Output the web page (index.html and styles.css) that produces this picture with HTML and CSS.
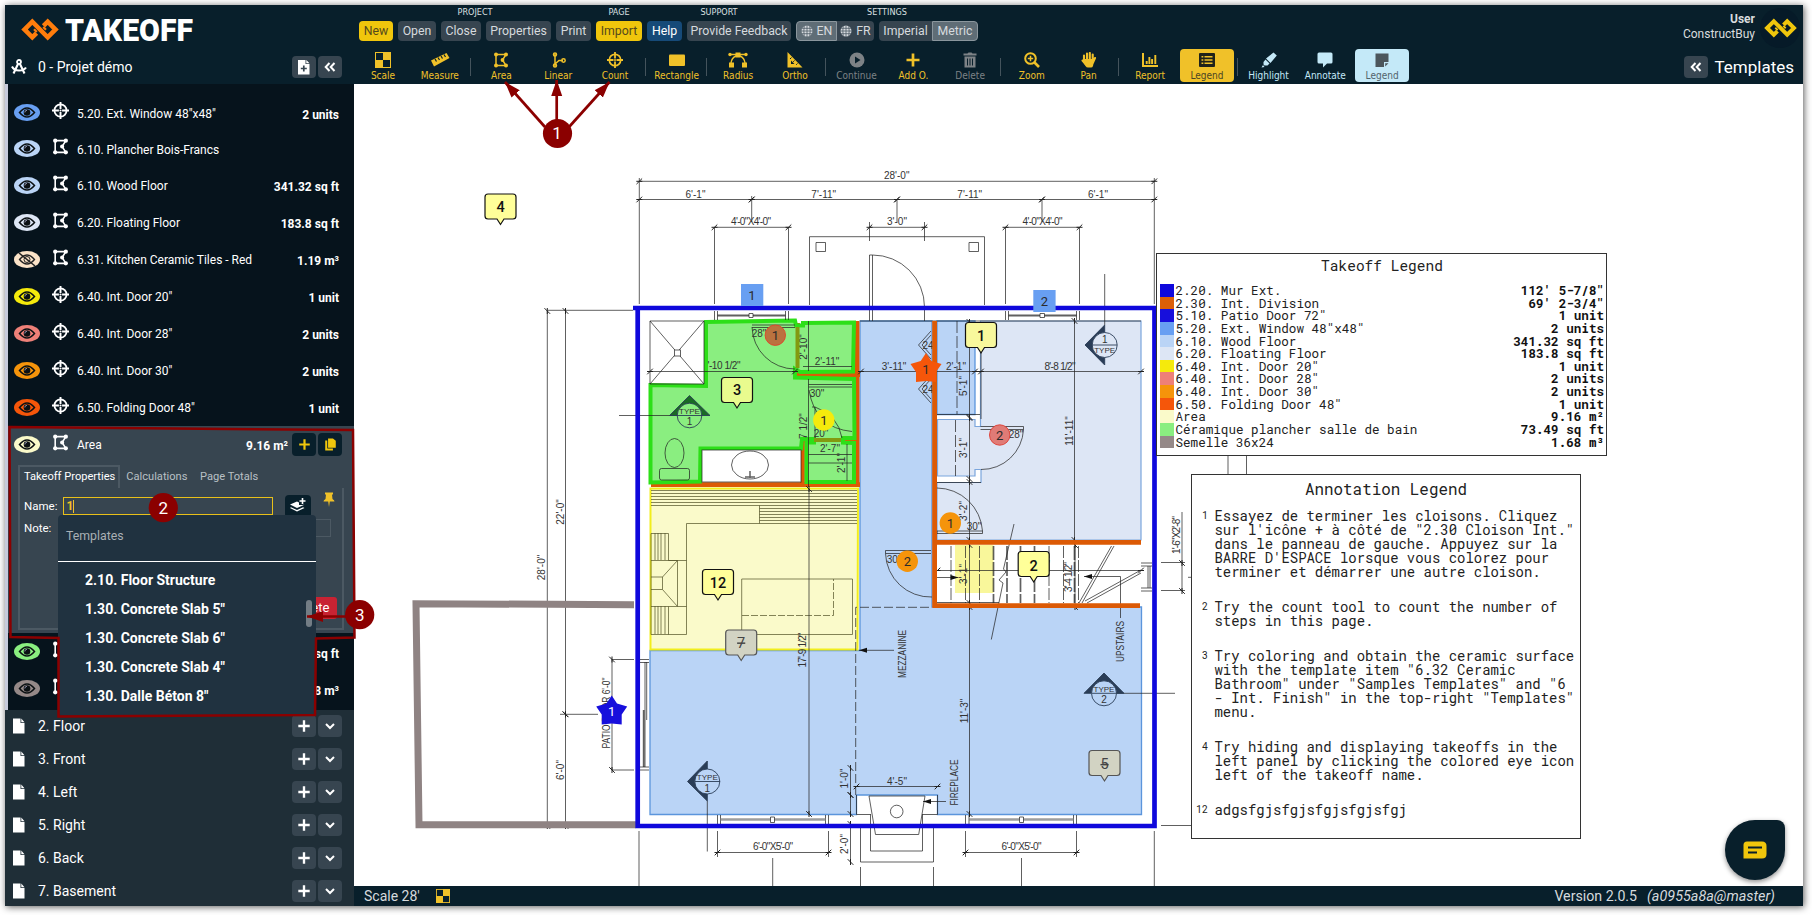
FILE: index.html
```html
<!DOCTYPE html>
<html lang="en">
<head>
<meta charset="utf-8">
<title>Takeoff</title>
<link rel="stylesheet" href="styles.css">
</head>
<body>
<svg class="sprite" width="0" height="0" aria-hidden="true">
  <symbol id="logo" viewBox="0 0 38 23"><path d="M15.500 15.100 11.300 19.300 3.500 11.500 11.300 3.700 26.700 19.300 34.500 11.500 26.700 3.700 22.500 7.900" fill="none" stroke="currentColor" stroke-width="4.600"/><path d="M13 11.200 15.800 14M25 11.800 22.200 9" stroke="currentColor" stroke-width="2.200"/></symbol>
  <symbol id="eye" viewBox="0 0 26 17"><path d="M5.500 8.500Q13-.5 20.500 8.500 13 17.500 5.500 8.500Z" fill="none" stroke="#0b1013" stroke-width="1.500"/><circle cx="13" cy="8.500" r="3.300" fill="#0b1013"/><path d="M13 6.300A2.200 2.200 0 0 0 10.800 8.500" stroke="#aac" stroke-width=".8" fill="none"/></symbol>
  <symbol id="eye-off" viewBox="0 0 26 17"><path d="M5.500 8.500Q13-.5 20.500 8.500 13 17.500 5.500 8.500Z" fill="none" stroke="#222" stroke-width="1.300"/><circle cx="13" cy="8.500" r="3" fill="none" stroke="#222"/><path d="M5 2 21 15" stroke="#222" stroke-width="1.500"/></symbol>
  <symbol id="target" viewBox="0 0 16 16"><circle cx="8" cy="8" r="5.700" fill="none" stroke="currentColor" stroke-width="1.700"/><path d="M8 0V6.500M8 9.500V16M0 8H6.500M9.500 8H16" stroke="currentColor" stroke-width="1.800"/><circle cx="8" cy="8" r="1" fill="currentColor"/></symbol>
  <symbol id="area" viewBox="0 0 16 16"><path d="M3 2.500H13L9.500 8 13 13.500H3Z" fill="none" stroke="currentColor" stroke-width="1.500"/><g fill="currentColor"><circle cx="3" cy="2.500" r="2"/><circle cx="13" cy="2.500" r="2"/><circle cx="9.500" cy="8" r="1.900"/><circle cx="13" cy="13.500" r="2"/><circle cx="3" cy="13.500" r="2"/></g></symbol>
  <symbol id="linear" viewBox="0 0 16 16"><path d="M5 2V14M5 12 9 8.500H13" fill="none" stroke="currentColor" stroke-width="1.500"/><g fill="none" stroke="currentColor" stroke-width="1.500"><circle cx="5" cy="2.500" r="1.500"/><circle cx="5" cy="13.500" r="1.500"/><circle cx="13.500" cy="8.500" r="1.700"/></g></symbol>
  <symbol id="scale" viewBox="0 0 16 16"><rect x=".5" y=".5" width="15" height="15" fill="none" stroke="currentColor"/><path d="M8 0H16V8H0V16H8Z" fill="currentColor"/></symbol>
  <symbol id="scale-alt" viewBox="0 0 16 16"><rect x=".5" y=".5" width="15" height="15" fill="none" stroke="currentColor"/><path d="M8 0H16V8H0V16H8Z" fill="currentColor"/></symbol>
  <symbol id="measure" viewBox="0 0 20 16"><path d="M1 8.500 16.500 1 19.500 6 4 14.500Z" fill="currentColor"/><path d="M5 7 6.500 9.500M8 5.500 9.500 8M11 4 12.500 6.500M14 2.500 15.500 5" stroke="#081f2b" stroke-width="1.200"/></symbol>
  <symbol id="rect" viewBox="0 0 16 16"><rect y="2.500" width="16" height="11.500" rx="1" fill="currentColor"/></symbol>
  <symbol id="radius" viewBox="0 0 20 16"><path d="M2 2.500H18M8 4Q3.500 6 3 11M12 4Q16.500 6 17 11" fill="none" stroke="currentColor" stroke-width="1.400"/><g fill="currentColor"><rect x="7.500" y=".5" width="5" height="5"/><rect x="1" y="10.500" width="5" height="5"/><rect x="14" y="10.500" width="5" height="5"/><circle cx="2" cy="2.500" r="1.700"/><circle cx="18" cy="2.500" r="1.700"/></g></symbol>
  <symbol id="ortho" viewBox="0 0 16 16"><path fill-rule="evenodd" d="M.5 0 15.500 15.500H.5ZM4 8.500V12H7.500Z" fill="currentColor"/><path d="M4.500 5.500 3 7M7.500 8.500 6.200 9.800M10.500 11.500 9.200 12.800" stroke="#081f2b"/></symbol>
  <symbol id="play" viewBox="0 0 16 16"><circle cx="8" cy="8" r="7.500" fill="currentColor"/><path d="M6 4.500 11.500 8 6 11.500Z" fill="#081f2b"/></symbol>
  <symbol id="plus" viewBox="0 0 16 16"><path d="M8 1.500V14.500M1.500 8H14.500" stroke="currentColor" stroke-width="2.700"/></symbol>
  <symbol id="trash" viewBox="0 0 16 16"><path d="M1.500 1.500H5.500L6.500 .5H9.500L10.500 1.500H14.500V3.500H1.500ZM2.500 4.500H13.500V15.500H2.500Z" fill="currentColor"/><path d="M5.500 6.500V13.500M8 6.500V13.500M10.500 6.500V13.500" stroke="#081f2b"/></symbol>
  <symbol id="zoom" viewBox="0 0 16 16"><circle cx="6.500" cy="6.500" r="5.300" fill="none" stroke="currentColor" stroke-width="2"/><path d="M6.500 3.800V9.200M3.800 6.500H9.200" stroke="currentColor" stroke-width="1.500"/><path d="M10.500 10.500 15 15" stroke="currentColor" stroke-width="2.700"/></symbol>
  <symbol id="hand" viewBox="0 0 16 16"><path d="M3 3.500V9M6 1.500V8M8.800 1V8M11.700 2.500V9M1.500 8.500 5 12.500M14 6 12 10.500" stroke="currentColor" stroke-width="2.100" stroke-linecap="round"/><path d="M2.500 7H13.500L12 14Q11.500 15.500 10 15.500H7Q5.500 15.500 4.500 14L2 10Z" fill="currentColor"/></symbol>
  <symbol id="report" viewBox="0 0 16 16"><path d="M1 1V14H16" fill="none" stroke="currentColor" stroke-width="2"/><path d="M4.700 12V9M7.400 12V5M10.100 12V7M13.300 12V3" stroke="currentColor" stroke-width="1.900"/></symbol>
  <symbol id="list" viewBox="0 0 16 16"><rect y="1" width="16" height="14" rx="1" fill="#20231a"/><path d="M5.500 4.700H13.500M5.500 8H13.500M5.500 11.300H13.500" stroke="#f0c129" stroke-width="1.400"/><path d="M2.500 4.700H4.300M2.500 8H4.300M2.500 11.300H4.300" stroke="#f0c129" stroke-width="1.600"/></symbol>
  <symbol id="marker" viewBox="0 0 16 16"><path d="M12.500.5 15.800 3.500 9.500 11 5 6.500ZM4.500 7.500 8.500 11.500 6.500 13.500H3.500L2.500 12.500V10ZM.5 15.500 2 13 3.500 15Z" fill="currentColor"/></symbol>
  <symbol id="bubble" viewBox="0 0 16 16"><path d="M2 .5H14Q15.500.5 15.500 2V10Q15.500 11.500 14 11.500H10L6 15.500V11.500H2Q.5 11.500.5 10V2Q.5.5 2 .5Z" fill="currentColor"/></symbol>
  <symbol id="note" viewBox="0 0 16 16"><path d="M1.500 1.500H14.500V10H10V15H1.500ZM11.200 11.200H14.500L11.200 14.500Z" fill="#4c565c"/></symbol>
  <symbol id="globe" viewBox="0 0 12 12"><circle cx="6" cy="6" r="5.500" fill="currentColor"/><path d="M6 0V12M0 6H12M3.200 1Q2.500 6 3.200 11M8.800 1Q9.500 6 8.800 11M1 3.300H11M1 8.700H11" stroke="#4c5a64" stroke-width=".8" fill="none"/></symbol>
  <symbol id="chev2" viewBox="0 0 12 12"><path d="M5.500 2 1.700 6 5.500 10M10.500 2 6.700 6 10.500 10" fill="none" stroke="currentColor" stroke-width="2"/></symbol>
  <symbol id="down" viewBox="0 0 12 12"><path d="M2 4 6 8 10 4" fill="none" stroke="currentColor" stroke-width="2"/></symbol>
  <symbol id="file" viewBox="0 0 12 16"><path d="M0 .5H7.500V5H11.500V15.500H0ZM8.300.5 11.500 4.200H8.300Z" fill="currentColor"/></symbol>
  <symbol id="file-plus" viewBox="0 0 12 16"><path d="M0 1H7.500V5H11.500V15.500H0ZM8.300 1 11.500 4.200H8.300Z" fill="currentColor"/><path d="M5.800 6.500V12.500M2.800 9.500H8.800" stroke="#374550" stroke-width="1.700"/></symbol>
  <symbol id="copy" viewBox="0 0 14 16"><path d="M4 .5H10L13.500 3.500V12H4ZM.5 3H3V13H10V15.500H.5Z" fill="currentColor"/></symbol>
  <symbol id="compass" viewBox="0 0 16 16"><circle cx="8" cy="3" r="2" fill="none" stroke="currentColor" stroke-width="1.800"/><path d="M7 5 2.500 14.500M9 5 13.500 14.500M1 7.500Q3 11.500 8 11.500T15 8.500" fill="none" stroke="currentColor" stroke-width="2.100"/></symbol>
  <symbol id="layers" viewBox="0 0 16 16"><path d="M0 6.500 7 3.500 9 4.500V7H12L14.500 6.800 7 10ZM1 9.300 7 12 13 9.300 14.500 10 7 13.500 0 10Z" fill="currentColor"/><path d="M12.500 0V6M9.500 3H15.500" stroke="currentColor" stroke-width="1.600"/></symbol>
  <symbol id="pin" viewBox="0 0 12 16"><path d="M2 .5H10V2.500H9L9.500 7Q11.500 8 11.500 9.500H.5Q.5 8 2.500 7L3 2.500H2ZM5.200 9.500H6.800L6 15Z" fill="currentColor"/></symbol>
</svg>

<div class="app">
  <header class="header">
    <div class="brand">
      <div class="brand-logo">
        <svg class="brand-mark"><use href="#logo"/></svg>
        <svg class="brand-name" viewBox="0 0 150 44"><text x="0" y="33" textLength="128" lengthAdjust="spacingAndGlyphs">TAKEOFF</text></svg>
      </div>
      <div class="project">
        <svg class="project-icon"><use href="#compass"/></svg>
        <span class="project-name">0 - Projet démo</span>
        <button class="sq"><svg class="i-file"><use href="#file-plus"/></svg></button>
        <button class="sq"><svg class="i12"><use href="#chev2"/></svg></button>
      </div>
    </div>
    <div class="toolbar">
      <div class="menus">
        <div class="menu"><h6>PROJECT</h6><div class="btns"><button class="btn gold w34">New</button><button class="btn w38">Open</button><button class="btn w40">Close</button><button class="btn w65">Properties</button><button class="btn w35">Print</button></div></div>
        <div class="menu"><h6>PAGE</h6><div class="btns"><button class="btn gold w46">Import</button></div></div>
        <div class="menu"><h6>SUPPORT</h6><div class="btns"><button class="btn blue w35">Help</button><button class="btn w104">Provide Feedback</button></div></div>
        <div class="menu"><h6>SETTINGS</h6><div class="btns"><div class="pair"><button class="btn on w41"><svg class="i12"><use href="#globe"/></svg>EN</button><button class="btn w37"><svg class="i12"><use href="#globe"/></svg>FR</button></div><div class="pair"><button class="btn w53">Imperial</button><button class="btn on w46">Metric</button></div></div></div>
      </div>
      <div class="tools">
        <div class="tool"><svg><use href="#scale"/></svg>Scale</div>
        <div class="tool"><svg class="wide"><use href="#measure"/></svg>Measure</div>
        <i class="sep"></i>
        <div class="tool"><svg><use href="#area"/></svg>Area</div>
        <div class="tool"><svg><use href="#linear"/></svg>Linear</div>
        <div class="tool"><svg><use href="#target"/></svg>Count</div>
        <i class="sep"></i>
        <div class="tool"><svg><use href="#rect"/></svg>Rectangle</div>
        <i class="sep"></i>
        <div class="tool"><svg class="wide"><use href="#radius"/></svg>Radius</div>
        <div class="tool"><svg><use href="#ortho"/></svg>Ortho</div>
        <i class="sep"></i>
        <div class="tool off"><svg><use href="#play"/></svg>Continue</div>
        <div class="tool"><svg><use href="#plus"/></svg>Add O.</div>
        <div class="tool off"><svg><use href="#trash"/></svg>Delete</div>
        <i class="sep"></i>
        <div class="tool"><svg><use href="#zoom"/></svg>Zoom</div>
        <div class="tool"><svg><use href="#hand"/></svg>Pan</div>
        <i class="sep"></i>
        <div class="tool"><svg><use href="#report"/></svg>Report</div>
        <div class="tool active-gold"><svg><use href="#list"/></svg>Legend</div>
        <i class="sep"></i>
        <div class="tool ice"><svg><use href="#marker"/></svg>Highlight</div>
        <div class="tool ice"><svg><use href="#bubble"/></svg>Annotate</div>
        <div class="tool active-ice"><svg><use href="#note"/></svg>Legend</div>
      </div>
    </div>
    <div class="account">
      <div class="user"><div class="user-text"><b>User</b><span>ConstructBuy</span></div><div class="avatar"><svg><use href="#logo"/></svg></div></div>
      <div class="templates"><button class="sq"><svg class="i12"><use href="#chev2"/></svg></button><span>Templates</span></div>
    </div>
  </header>

  <div class="body">
    <aside class="sidebar">
      <div class="takeoffs">
        <div class="row short"><svg class="eye c-window"><use href="#eye"/></svg><svg class="kind"><use href="#target"/></svg><span>5.20. Ext. Window 48"x48"</span><b>2 units</b></div>
        <div class="row short"><svg class="eye c-wood"><use href="#eye"/></svg><svg class="kind"><use href="#area"/></svg><span>6.10. Plancher Bois-Francs</span></div>
        <div class="row"><svg class="eye c-wood"><use href="#eye"/></svg><svg class="kind"><use href="#area"/></svg><span>6.10. Wood Floor</span><b>341.32 sq ft</b></div>
        <div class="row"><svg class="eye c-float"><use href="#eye"/></svg><svg class="kind"><use href="#area"/></svg><span>6.20. Floating Floor</span><b>183.8 sq ft</b></div>
        <div class="row"><svg class="eye c-tile"><use href="#eye-off"/></svg><svg class="kind"><use href="#area"/></svg><span>6.31. Kitchen Ceramic Tiles - Red</span><b>1.19 m³</b></div>
        <div class="row"><svg class="eye c-d20"><use href="#eye"/></svg><svg class="kind"><use href="#target"/></svg><span>6.40. Int. Door 20"</span><b>1 unit</b></div>
        <div class="row"><svg class="eye c-d28"><use href="#eye"/></svg><svg class="kind"><use href="#target"/></svg><span>6.40. Int. Door 28"</span><b>2 units</b></div>
        <div class="row"><svg class="eye c-d30"><use href="#eye"/></svg><svg class="kind"><use href="#target"/></svg><span>6.40. Int. Door 30"</span><b>2 units</b></div>
        <div class="row"><svg class="eye c-fold"><use href="#eye"/></svg><svg class="kind"><use href="#target"/></svg><span>6.50. Folding Door 48"</span><b>1 unit</b></div>
        <section class="selected">
          <div class="row sel"><svg class="eye c-area"><use href="#eye"/></svg><svg class="kind"><use href="#area"/></svg><span>Area</span><b>9.16 m²</b><button class="dk"><svg class="i14"><use href="#plus"/></svg></button><button class="dk"><svg class="i14"><use href="#copy"/></svg></button></div>
          <div class="tabs"><span class="tab cur">Takeoff Properties</span><span class="tab">Calculations</span><span class="tab">Page Totals</span></div>
          <div class="pane">
            <div class="field"><label>Name:</label><div class="input focus">1<i class="caret"></i></div><button class="dk layers"><svg class="i16"><use href="#layers"/></svg></button><svg class="pin"><use href="#pin"/></svg></div>
            <div class="field note"><label>Note:</label><div class="input"></div></div>
            <button class="delete">Delete</button>
            <div class="dropdown">
              <div class="dd-title">Templates</div>
              <ul><li>2.10. Floor Structure</li><li>1.30. Concrete Slab 5"</li><li>1.30. Concrete Slab 6"</li><li>1.30. Concrete Slab 4"</li><li>1.30. Dalle Béton 8"</li></ul>
              <i class="thumb"></i>
            </div>
          </div>
        </section>
        <div class="row"><svg class="eye c-green"><use href="#eye"/></svg><svg class="kind"><use href="#area"/></svg><span></span><b>73.49 sq ft</b></div>
        <div class="row"><svg class="eye c-grey"><use href="#eye"/></svg><svg class="kind"><use href="#area"/></svg><span></span><b>1.68 m³</b></div>
      </div>
      <div class="pages">
        <div class="page"><svg class="i-file"><use href="#file"/></svg><span>2. Floor</span><button class="sq"><svg class="i14"><use href="#plus"/></svg></button><button class="sq"><svg class="i12"><use href="#down"/></svg></button></div>
        <div class="page"><svg class="i-file"><use href="#file"/></svg><span>3. Front</span><button class="sq"><svg class="i14"><use href="#plus"/></svg></button><button class="sq"><svg class="i12"><use href="#down"/></svg></button></div>
        <div class="page"><svg class="i-file"><use href="#file"/></svg><span>4. Left</span><button class="sq"><svg class="i14"><use href="#plus"/></svg></button><button class="sq"><svg class="i12"><use href="#down"/></svg></button></div>
        <div class="page"><svg class="i-file"><use href="#file"/></svg><span>5. Right</span><button class="sq"><svg class="i14"><use href="#plus"/></svg></button><button class="sq"><svg class="i12"><use href="#down"/></svg></button></div>
        <div class="page"><svg class="i-file"><use href="#file"/></svg><span>6. Back</span><button class="sq"><svg class="i14"><use href="#plus"/></svg></button><button class="sq"><svg class="i12"><use href="#down"/></svg></button></div>
        <div class="page"><svg class="i-file"><use href="#file"/></svg><span>7. Basement</span><button class="sq"><svg class="i14"><use href="#plus"/></svg></button><button class="sq"><svg class="i12"><use href="#down"/></svg></button></div>
      </div>
    </aside>

    <main class="main">
      <div class="canvas">
        <svg class="plan" width="1449" height="802" viewBox="354 84 1449 802">
          <defs>
            <marker id="tk" viewBox="-5 -5 10 10" markerWidth="10" markerHeight="10" markerUnits="userSpaceOnUse" orient="auto"><path d="M-2.800 2.800 2.800-2.800M-3 0H3" stroke="#222" stroke-width="1"/></marker>
            <marker id="ar" viewBox="-9 -4 10 8" markerWidth="10" markerHeight="8" markerUnits="userSpaceOnUse" orient="auto"><path d="M0 0-8-2.500V2.500Z" fill="#111"/></marker>
            <g id="call"><path d="M-12.500-12.500H12.500Q15.500-12.500 15.500-9.500V9.500Q15.500 12.500 12.500 12.500H3.500L0 18-3.500 12.500H-12.500Q-15.500 12.500-15.500 9.500V-9.500Q-15.500-12.500-12.500-12.500Z"/></g>
            <g id="star"><path d="M0-15.500 5.300-7.500 15.500-4.500 10 3.500 10 13.500 0 12.500-10 13.500-10 3.500-15.500-4.500-5.300-7.500Z"/></g>
          </defs>

          <!-- floor surfaces -->
          <path class="wood" d="M860 321H932V607H1141.500V814.500H937.500V795H856.500V814.500H650V650.500H860Z"/>
          <path class="wood" d="M937 321H975V414.500H937Z"/>
          <path class="float" d="M980.500 321H1141V540H937V482.500H981V469.500H975V476H937.500V419.500H975V426.500H980.500Z"/>
          <path class="kitchen" d="M650.500 488.500H858L857.500 649.500H650.500Z"/>
          <path class="or" d="M857 321V487M651 484.700H860M795 374.500H860M802.500 439V484M797.500 323V376M802 440H857"/>
          <path class="bath" d="M706 322 795 320.500 796 325.500H803V323L854 322.500 853 371.500 800 372 795 369V377.500L854 379 854.500 438H843V442.500L854 443V482H806.500V442.500H814V439H802L801 448.500H700.500L700 481.500 650.500 482.500V385L706 386Z"/>
          <rect x="955" y="545" width="38.500" height="48" fill="#f9f79b"/>

          <!-- base drawing -->
          <g class="ln">
            <path d="M639.300 178V304M1154.300 178V304M751.700 196V222M897 199V222M1042 199V222M714.500 227V304M788.500 227V304M1005.500 227V304M1079.500 227V304M869.500 222V241M924.500 222V241"/>
            <path d="M809.500 305V236.700H984.500V305M816 242.500H825.500V251.500H816ZM969 242.500H978.500V251.500H969ZM869.500 321V255H872.500V321M872.500 255A52 52 0 0 1 924.500 307V321"/>
            <path d="M714.500 311V320M717.500 311V320M785.500 311V320M788.500 311V320M1005.500 311V320M1008.500 311V320M1076.500 311V320M1079.500 311V320M650 321H704M860 321H1141"/>
            <path d="M717.500 315.500H785.500M1008.500 315.500H1076.500" stroke-width="2"/>
            <path d="M749 313.500H753V317.500H749ZM1040 313.500H1044.500V317.500H1040Z" fill="#fff"/>
            <path d="M650 321V384H704V321M650 321 704 384M704 321 650 384"/><rect x="674.500" y="350" width="6" height="6" fill="#fff"/>
            <path d="M752 325H795M752 327.500H795M752 327A43 43 0 0 0 795 369M808.500 321V371M808.500 379V487M803 366.500H852" />
            <path d="M808.500 384.500H852M808.500 387H852M809 390Q815 428 852 431.500M812 407H815V438M815 407Q838 415 842 438M808.500 454.500H852M808.500 463H852M847 444V481"/>
            <rect x="702" y="450" width="99" height="32" fill="#fff"/><ellipse cx="750" cy="465" rx="18.500" ry="14"/><path d="M745 477H755M750 471V478" stroke-width="1.500"/>
            <ellipse cx="674.500" cy="453" rx="9.500" ry="14.500"/><rect x="659.500" y="468.500" width="30" height="11.500" rx="2"/>
            <path d="M957 321V414M955.500 420V476" stroke-dasharray="12 3"/>
            <path d="M1104.700 274V325M981 419V327M937 414.500H980M937 482.500H981"/>
            <path d="M931 331 918.500 345 931 359M931 335 922 345 931 355M931 375 918.500 389 931 403M931 379 922 389 931 399"/>
            <path d="M980.500 426.500H1023.500V429.500H980.500M1023.500 429.500A42 42 0 0 1 981 469.500M937 488A46 46 0 0 1 982.500 531V533.500H937V531H982.500M931 550.500H885.500V553.500H931M885.500 553.500A45 45 0 0 0 932 597"/>
            <path d="M548 310.300H633M560 714.300H598M619 415.500H677M707.300 801V851.500M1117 693.300H1175"/>
            <path d="M612 659.500H634M612 770H634M640 659.500H649M640 662.500H649M640 767H649M640 770H649M645 662V767M646.700 662V720"/><path d="M643.700 710V767" stroke-width="1.800"/>
            <g class="kl"><path d="M651 490.500H857M651 493.500H857M651 496.500H857M651 499.500H857M651 502.500H857M651 505.500H857M759.500 505.500V523.500M759.500 508.500H857M759.500 511.500H857M759.500 514.500H857M759.500 517.500H857M759.500 520.500H857M857 523.500H686.500V634.500H651V533.500H668.500V560.500H686.500M655 533V560M658 533V560M661 533V560M665 533V560M651 560.500H677.500V606.500H651M677.500 606.500H686.500M668.500 606.500V634.500M655 606V634M658 606V634M661 606V634M665 606V634M651 577H662.500V589.500H651M662.500 577 677.500 560.500M662.500 589.500 677.500 606.500M741.700 579H852.500V634.500H741.700Z"/><path d="M742 615.500H833.500V579" stroke-dasharray="7 2"/></g>
            <path d="M855.700 795V607.300H932" stroke-dasharray="9 3"/>
            <path d="M951 546V603M965.500 546V603M979.500 546V603M1049 546V603M1063.500 546V603M1078.500 546V603" stroke-dasharray="12 2"/>
            <path d="M993.500 546V603M1007 546V603M1020.500 546V603M1034.500 546V603M1074.500 546V603" stroke-width="1.700" stroke-dasharray="14 2"/>
            <path d="M1111.500 546 1079 603M1114 546 1082 603M1141 570 1085 601M1141 573 1087 603M937 602.500H999"/>
            <path d="M1014 524 1003.500 569 1006 572 999 580 1003 583 991.300 639.500"/>
            <path d="M1141 563H1152M1141 566H1152M1141 588H1152M1141 591H1152M1148 566V588M1150 566V588M1161 562.500H1185M1161 590.500H1185M1182 512V563M1188 577.300H1192M1161 825.500H1192M1228 455V476M1246.500 455V476"/>
            <path d="M639 831V886M860.500 867V886M933.500 867V886M1154.300 831V886M772.700 858V886M1021.500 858V886M717.500 831V857M828.500 831V857M965.500 831V857M1076.500 831V857"/>
            <path d="M717.500 815V824M720.500 815V824M825.500 815V824M828.500 815V824M965.500 815V824M969 815V824M1073.500 815V824M1076.500 815V824"/><path d="M720 819.500H826M969 819.500H1074" stroke-width="2.500" stroke="#777"/><path d="M770.500 817H774.500V822.500H770.500ZM1019.500 817H1023.500V822.500H1019.500Z" fill="#fff"/>
            <path d="M860.500 828V862H933.500V828M870.500 814V851H922.500V814M856.500 795V814.500H870.500M922.500 814.500H937.500V795M869 796H925L918.700 834.500H875.500Z" /><circle cx="896.700" cy="811.500" r="6.300"/>
          </g>
          <g class="ln dim">
            <path d="M639.300 181.300H1154.300"/><path d="M639.300 199.500H751.700"/><path d="M751.700 199.500H897"/><path d="M897 199.500H1042"/><path d="M1042 199.500H1154.300"/>
            <path d="M714.500 227.300H788.500"/><path d="M869.500 227.300H924.500"/><path d="M1005.500 227.300H1079.500"/>
            <path d="M650 371.500H795"/><path d="M861 371.500H975"/><path d="M981 371.500H1141"/><path d="M937.500 570.500H1141"/>
            <path d="M969.500 322V417"/><path d="M969.500 418V479"/><path d="M969.500 482V540"/><path d="M969.500 545V603"/><path d="M969.500 607V814"/><path d="M1074.500 321V540"/><path d="M1075 545V607"/>
            <path d="M809 489V814"/><path d="M565.500 311V714.300"/><path d="M565.500 714.300V826"/><path d="M547.300 311V826"/><path d="M612 659.500V770"/>
            <path d="M717.500 852.500H828.500"/><path d="M965.500 852.500H1076.500"/><path d="M856.500 786.500H937.500"/><path d="M850.500 768V795"/><path d="M850.500 795V814"/><path d="M850.500 824V862"/><path d="M1182 563V591"/>
          </g>
          <g class="ln arrow"><path d="M937 577.500H958.500"/><path d="M1120.500 618V576.500H1084"/><path d="M894 650.300H859"/><path d="M946 801.500H923"/></g>
          <g class="type">
            <path d="M689.500 395.500 710 415.500H669.500Z" fill="#1a6a25"/><circle cx="689.500" cy="415.500" r="12.300" fill="#8aee80"/><path d="M677 415.500H702"/>
            <path d="M1085 345 1104.700 325V365Z"/><circle cx="1104.700" cy="345" r="12.500" fill="#dde6f5"/><path d="M1092 345H1117"/>
            <path d="M687.500 781.500 707.300 761V801Z"/><circle cx="707.300" cy="781.500" r="12.500" fill="#bad4f6"/><path d="M695 781.500H720"/>
            <path d="M1104 673 1124 693.300H1084Z"/><circle cx="1104" cy="693.300" r="12.500" fill="#bad4f6"/><path d="M1092 693.300H1117"/>
          </g>
          <g class="dt">
            <text x="896.700" y="175">28'-0"</text><text x="695.500" y="194">6'-1"</text><text x="823.700" y="194">7'-11"</text><text x="969.700" y="194">7'-11"</text><text x="1098" y="194">6'-1"</text>
            <text x="751" y="221.500" textLength="40">4'-0"X4'-0"</text><text x="897" y="221.500">3'-0"</text><text x="1042.500" y="221.500" textLength="40">4'-0"X4'-0"</text>
            <text x="724" y="365.500" textLength="33">'-10 1/2"</text><text x="827" y="361">2'-11"</text><text x="894" y="366">3'-11"</text><text x="956" y="366">2'-1"</text><text x="1060" y="366" textLength="31">8'-8 1/2"</text>
            <text x="759" y="333">28"</text><text x="817" y="393.500">30"</text><text x="821" y="433">20"</text><text x="830" y="448.500">2'-7"</text><text x="928" y="345.500">24</text><text x="928" y="389.500">24</text>
            <text x="1016" y="434.500">28"</text><text x="974" y="526">30"</text><text x="894" y="559.500">30"</text><text x="1040" y="564">8'-1"</text><text x="897" y="781">4'-5"</text>
            <text x="773" y="846.500" textLength="40">6'-0"X5'-0"</text><text x="1021.500" y="846.500" textLength="40">6'-0"X5'-0"</text>
            <text x="689.500" y="411" class="s">TYPE</text><text x="689.500" y="421.500">1</text><text x="1104.700" y="339.500">1</text><text x="1104.700" y="350.500" class="s">TYPE</text>
            <text x="707.300" y="777" class="s">TYPE</text><text x="707.300" y="788">1</text><text x="1104" y="689" class="s">TYPE</text><text x="1104" y="699.500">2</text>
            <text transform="translate(803.500 347) rotate(-90)">2'-10"</text><text transform="translate(803 426) rotate(-90)">7 1/2"</text><text transform="translate(841 463) rotate(-90)">2'-1"</text>
            <text transform="translate(963.500 386) rotate(-90)">5'-1"</text><text transform="translate(963.500 448) rotate(-90)">3'-1"</text><text transform="translate(963.500 511) rotate(-90)">3'-2"</text><text transform="translate(963.500 574) rotate(-90)">3'-1"</text><text transform="translate(964 711) rotate(-90)">11'-3"</text>
            <text transform="translate(1069 431) rotate(-90)">11'-11"</text><text transform="translate(1068.500 577) rotate(-90)" textLength="30">3'-4 1/2"</text>
            <text transform="translate(560 512) rotate(-90)">22'-0"</text><text transform="translate(541.500 567.500) rotate(-90)">28'-0"</text><text transform="translate(560 770) rotate(-90)">6'-0"</text>
            <text transform="translate(606 713) rotate(-90)" textLength="71" lengthAdjust="spacingAndGlyphs">PATIO DOOR 6'-0"</text><text transform="translate(802.500 650) rotate(-90)" textLength="35">17'-9 1/2"</text>
            <text transform="translate(902.500 654) rotate(-90)" textLength="48" lengthAdjust="spacingAndGlyphs">MEZZANINE</text><text transform="translate(954 782.500) rotate(-90)" textLength="46" lengthAdjust="spacingAndGlyphs">FIREPLACE</text><text transform="translate(1120.500 641.500) rotate(-90)" textLength="41" lengthAdjust="spacingAndGlyphs">UPSTAIRS</text>
            <text transform="translate(844 778.500) rotate(-90)">1'-0"</text><text transform="translate(844 844) rotate(-90)">2'-0"</text><text transform="translate(1176 535) rotate(-90)" textLength="38">1'-6"X2'-8"</text>
          </g>

          <!-- traced walls -->
          <path d="M634 604.700 416 603.700 419 824.700H636" fill="none" stroke="#8f8383" stroke-width="7"/>
          <path d="M633 308H1154.500V826H637.700V308" fill="none" stroke="#0f08dc" stroke-width="4.700"/>
          <path class="or" d="M934.600 321V607.500M932.500 542.300H1141M932.500 605.700H1140"/>
          <path d="M797.500 327V368M814 440H841" stroke="#839a10" stroke-width="4"/>

          <!-- count markers -->
          <g class="cnt">
            <rect x="741" y="284" width="22.300" height="22" fill="#689ff2"/><text x="752" y="295">1</text>
            <rect x="1033.300" y="290" width="22.300" height="22" fill="#689ff2"/><text x="1044.500" y="301">2</text>
            <circle cx="775.300" cy="335.200" r="10.200" fill="#bb723f" stroke="#dc4a2c"/><text x="775.300" y="335">1</text>
            <circle cx="823.800" cy="420" r="10.700" fill="#f5ea0c"/><text x="824" y="420">1</text>
            <circle cx="999.700" cy="435" r="10.200" fill="#e07b76" stroke="#de453c"/><text x="999.700" y="435">2</text>
            <circle cx="950.300" cy="523" r="10.700" fill="#f5940b"/><text x="950.300" y="523">1</text>
            <circle cx="907.300" cy="561.300" r="10.700" fill="#f5940b"/><text x="907.300" y="561">2</text>
            <use href="#star" x="926" y="368.500" fill="#f5560a"/><text x="926" y="369">1</text>
            <use href="#star" x="611.700" y="711" fill="#170fdc"/><text x="611.700" y="711" class="wt">1</text>
          </g>
          <!-- annotation callouts -->
          <g class="calls">
            <use href="#call" x="500.500" y="206.500"/><text x="500.500" y="207.500">4</text>
            <use href="#call" x="737" y="390" fill="#e9fb8e"/><text x="737" y="390.500">3</text>
            <use href="#call" x="981" y="335" fill="#f8f89c"/><text x="981" y="336">1</text>
            <use href="#call" x="718" y="582"/><text x="718" y="583">12</text>
            <use href="#call" x="1033.700" y="564"/><text x="1033.700" y="566">2</text>
            <g class="done"><use href="#call" x="741.200" y="642.500"/><text x="741.200" y="643">7</text><use href="#call" x="1104.500" y="763"/><text x="1104.500" y="764.500">5</text></g>
          </g>
        </svg>

        <section class="legend takeoff-legend">
          <h2>Takeoff Legend</h2>
          <div class="lg"><i class="c-mur"></i><span>2.20. Mur Ext.</span><b>112' 5-7/8"</b></div>
          <div class="lg"><i class="c-div"></i><span>2.30. Int. Division</span><b>69' 2-3/4"</b></div>
          <div class="lg"><i class="c-patio"></i><span>5.10. Patio Door 72"</span><b>1 unit</b></div>
          <div class="lg"><i class="c-window"></i><span>5.20. Ext. Window 48"x48"</span><b>2 units</b></div>
          <div class="lg"><i class="c-wood"></i><span>6.10. Wood Floor</span><b>341.32 sq ft</b></div>
          <div class="lg"><i class="c-float"></i><span>6.20. Floating Floor</span><b>183.8 sq ft</b></div>
          <div class="lg"><i class="c-d20"></i><span>6.40. Int. Door 20"</span><b>1 unit</b></div>
          <div class="lg"><i class="c-d28"></i><span>6.40. Int. Door 28"</span><b>2 units</b></div>
          <div class="lg"><i class="c-d30"></i><span>6.40. Int. Door 30"</span><b>2 units</b></div>
          <div class="lg"><i class="c-fold"></i><span>6.50. Folding Door 48"</span><b>1 unit</b></div>
          <div class="lg"><i class="c-area"></i><span>Area</span><b>9.16 m²</b></div>
          <div class="lg"><i class="c-green"></i><span>Céramique plancher salle de bain</span><b>73.49 sq ft</b></div>
          <div class="lg"><i class="c-grey"></i><span>Semelle 36x24</span><b>1.68 m³</b></div>
        </section>

        <section class="legend note-legend">
          <h2>Annotation Legend</h2>
          <div class="an"><sup>1</sup><p>Essayez de terminer les cloisons. Cliquez<br>sur l'icône + à côté de "2.30 Cloison Int."<br>dans le panneau de gauche. Appuyez sur la<br>BARRE D'ESPACE lorsque vous colorez pour<br>terminer et démarrer une autre cloison.</p></div>
          <div class="an"><sup>2</sup><p>Try the count tool to count the number of<br>steps in this page.</p></div>
          <div class="an"><sup>3</sup><p>Try coloring and obtain the ceramic surface<br>with the template item "6.32 Ceramic<br>Bathroom" under "Samples Templates" and "6<br>- Int. Finish" in the top-right "Templates"<br>menu.</p></div>
          <div class="an"><sup>4</sup><p>Try hiding and displaying takeoffs in the<br>left panel by clicking the colored eye icon<br>left of the takeoff name.</p></div>
          <div class="an"><sup>12</sup><p>adgsfgjsfgjsfgjsfgjsfgj</p></div>
        </section>

        <div class="chat"><svg width="24" height="18" viewBox="0 0 24 18"><path d="M4 .5H19Q23.500.5 23.500 5V13Q23.500 17.500 19 17.500H.5V4Q.5.5 4 .5Z" fill="#f0c60c"/><path d="M5 6.500H19M5 11.500H14" stroke="#081f2b" stroke-width="2"/></svg></div>
      </div>
      <footer class="footer"><span>Scale 28'</span><svg class="i14"><use href="#scale-alt"/></svg><span class="ver">Version 2.0.5</span><em>(a0955a8a@master)</em></footer>
    </main>
  </div>
</div>

<svg class="guide" width="1812" height="915" viewBox="0 0 1812 915">
  <defs><marker id="ga" viewBox="-16 -6 17 12" markerWidth="17" markerHeight="12" markerUnits="userSpaceOnUse" orient="auto"><path d="M0 0-16-5.500V5.500Z" fill="#8b0000"/></marker></defs>
  <path d="M9.500 427 353 430 354.500 637.500 316 638.500 315 715 58.500 716.500V638L10.500 637Z" fill="none" stroke="#8b0000" stroke-width="2.500"/>
  <g stroke="#8b0000" stroke-width="2.700"><path d="M545 127 505 82" marker-end="url(#ga)"/><path d="M556.700 125V80" marker-end="url(#ga)"/><path d="M569 127 609.500 82" marker-end="url(#ga)"/><path d="M350 616.500H307" marker-end="url(#ga)"/></g>
  <g fill="#8b0000"><circle cx="557.500" cy="133.500" r="14.600"/><circle cx="163.300" cy="507.700" r="14.600"/><circle cx="359.700" cy="614.700" r="14.600"/></g>
  <g class="guide-no"><text x="557" y="133">1</text><text x="163.300" y="507.500">2</text><text x="359.700" y="614.500">3</text></g>
</svg>
</body>
</html>
```

FILE: styles.css
```css
* { box-sizing: border-box; }
body { margin: 0; width: 1812px; height: 915px; overflow: hidden; background: #fff; font-family: Roboto, "Liberation Sans", sans-serif; font-size: 12px; color: #fff; position: relative; }
button { font: inherit; color: inherit; border: 0; margin: 0; padding: 0; display: flex; align-items: center; justify-content: center; }
h2, h6, p, ul { margin: 0; padding: 0; font-weight: 400; }
.sprite { position: absolute; }
.app { margin: 5px 0 0 5px; width: 1798px; height: 901px; display: flex; flex-direction: column; box-shadow: 1px 1px 7px rgba(0,0,0,.65); background: #fff; }
.header { height: 79px; flex: none; background: #081f2b; display: flex; }
.i12 { width: 12px; height: 12px; }
.i14 { width: 14px; height: 14px; }
.i16 { width: 16px; height: 16px; }
.i-file { width: 12px; height: 16px; }
.sq { width: 24px; height: 22px; border-radius: 4px; background: #374550; flex: none; }

.brand { width: 349px; flex: none; }
.brand-logo { display: flex; padding: 13px 0 0 16px; height: 51px; gap: 6px; }
.brand-mark { width: 38px; height: 23px; color: #ff7d0c; }
.brand-name { width: 150px; height: 44px; margin-top: -10px; }
.brand-name text { font-weight: 900; font-size: 32px; fill: #fff; }
.project { display: flex; align-items: center; gap: 2px; height: 22px; padding: 0 12px 0 6px; }
.project-icon { width: 16px; height: 16px; margin-right: 9px; }
.project-name { flex: 1; font-size: 14px; }

.toolbar { width: 1060px; flex: none; }
.menus { display: flex; gap: 5px; padding-left: 5px; height: 38px; }
.menu h6 { font: 9px/11px "DejaVu Sans Condensed", "DejaVu Sans", sans-serif; text-align: center; padding-top: 2px; height: 16px; color: #dde1e3; }
.btns { display: flex; gap: 5px; }
.pair { display: flex; }
.pair .btn:first-child { border-radius: 4px 0 0 4px; }
.pair .btn:last-child { border-radius: 0 4px 4px 0; }
.btn { height: 20px; border-radius: 4px; background: #374550; color: #d6dade; gap: 4px; white-space: nowrap; font-size: 12.300px; }
.btn.gold { background: #f0c60c; color: #544a1c; }
.btn.blue { background: #164a78; color: #fff; }
.btn.on { background: #5f6d76; border: 1px solid #8b969d; }
.w34 { width: 34px; } .w35 { width: 35px; } .w37 { width: 37px; } .w38 { width: 38px; } .w40 { width: 40px; } .w41 { width: 41px; } .w46 { width: 46px; } .w53 { width: 53px; } .w65 { width: 65px; } .w104 { width: 104px; }
.tools { display: flex; gap: 2.800px; padding: 6px 0 0 2px; align-items: flex-start; }
.tool { width: 54px; height: 33px; border-radius: 4px; display: flex; flex-direction: column; align-items: center; padding-top: 2.500px; gap: 1px; color: #f0c129; font: 10px/13px "DejaVu Sans Condensed", "DejaVu Sans", sans-serif; white-space: nowrap; }
.tool svg { width: 16px; height: 16px; flex: none; }
.tool svg.wide { width: 20px; }
.tool.off { color: #7d8286; }
.tool.ice { color: #c4e9f8; }
.tool.active-gold { background: #f0c129; color: #4b4524; }
.tool.active-ice { background: #c4e9f8; color: #52636b; }
.sep { width: 2px; height: 18px; margin-top: 9px; border-left: 1px solid #44535c; }

.account { flex: 1; display: flex; flex-direction: column; align-items: flex-end; }
.user { display: flex; gap: 5px; height: 51px; padding-right: 3px; }
.user-text { text-align: right; display: flex; flex-direction: column; padding-top: 7px; line-height: 15px; color: #d9dcde; }
.avatar { width: 40px; height: 40px; margin-top: 3px; border-radius: 50%; background: #061a28; display: flex; align-items: center; justify-content: center; color: #f0c60c; }
.avatar svg { width: 33px; height: 20px; }
.templates { display: flex; align-items: center; gap: 6px; font-size: 17px; padding-right: 9px; height: 22px; }

.body { flex: 1; display: flex; min-height: 0; }
.sidebar { width: 349px; flex: none; display: flex; flex-direction: column; overflow: hidden; }
.takeoffs { height: 625.500px; flex: none; background: #06131c; border-left: 3px solid #c6cadb; padding-top: 10.500px; overflow: visible; }
.row { height: 37px; display: flex; align-items: center; padding: 0 15px 0 6px; }
.row.short { height: 36.200px; }
.eye { width: 26px; height: 17px; border-radius: 50%; flex: none; }
.kind { width: 17px; height: 17px; margin: -4px 8px 0 12px; flex: none; }
.row span { flex: 1; padding-top: 2px; }
.row b { padding-top: 4px; }
.selected { height: 207.500px; background: #374550; padding-top: 1px; }
.sel { padding-right: 12px; gap: 0; height: 35px; }
.sel b { margin-right: 4px; }
.dk { width: 24px; height: 23px; border-radius: 4px; background: #081f2b; color: #f0c60c; }
.dk + .dk { margin-left: 2px; }
.dk .i14 { width: 13px; height: 13px; }
.tabs { display: flex; align-items: flex-end; margin-left: 10px; height: 26px; font-size: 11.100px; }
.tab { padding: 5px 6.300px 0; height: 23px; color: #b9c0c5; }
.tab.cur { border: 2px solid #4c5963; border-bottom: 0; color: #fff; padding: 3px 4px 0; width: 102px; white-space: nowrap; }
.pane { margin: 0 10px; height: 142px; border: 2px solid #4c5963; border-top: 0; position: relative; padding: 9px 0 0 4px; }
.field { display: flex; height: 22px; }
.field label { width: 38.500px; line-height: 19px; font-size: 11.500px; }
.input { width: 210px; height: 18px; border: 1px solid #4c5963; }
.input.focus { border: 1px solid #e8c01a; color: #f0c129; font-weight: 700; line-height: 16px; padding-left: 3px; display: flex; }
.caret { border-left: 1px solid #f0c129; height: 13px; margin-top: 2px; }
.field .layers { color: #fff; width: 26px; margin: -2px 12px 0 12px; }
.pin { width: 12px; height: 16px; color: #f0c129; margin-top: -5px; }
.note .input { width: 268px; }
.delete { position: absolute; right: 5px; top: 109px; width: 52px; height: 22px; border-radius: 3px; background: #c82333; font-size: 13px; }
.dropdown { position: absolute; left: 38px; top: 27px; width: 258px; height: 200px; background: #203240; border-radius: 4px; z-index: 2; }
.dd-title { height: 47.500px; border-bottom: 1px solid #fff; padding: 14.500px 0 0 8px; color: #a9b0b5; font-size: 12.300px; }
.dropdown ul { list-style: none; padding: 4px 0 0 27px; font-weight: 700; font-size: 14px; line-height: 29px; }
.thumb { position: absolute; right: 4px; top: 85px; width: 6px; height: 27px; border-radius: 3px; background: #737d85; }
.pages { flex: 1; background: #1f2e37; }
.page { height: 33px; display: flex; align-items: center; padding: 0 12px 0 8px; gap: 2px; font-size: 14px; }
.page span { flex: 1; padding-left: 11px; }

.main { flex: 1; display: flex; flex-direction: column; min-width: 0; }
.canvas { flex: 1; position: relative; overflow: hidden; background: #fff; color: #222; }
.plan { display: block; }
.ln { fill: none; stroke: #222; stroke-width: 1; stroke-opacity: .72; }
.dim path { marker-start: url(#tk); marker-end: url(#tk); }
.arrow path { marker-end: url(#ar); }
.kl { stroke: #55552a; }
.wood { fill: #bad4f6; stroke: #5b95dc; stroke-width: 1.300; }
.float { fill: #dde6f5; stroke: #7ba6dd; stroke-width: 1.200; }
.kitchen { fill: #fafaca; stroke: #f2ee1c; stroke-width: 2; }
.bath { fill: #8aee80; stroke: #2ddf18; stroke-width: 4; }
.or { fill: none; stroke: #dc5a05; stroke-width: 4.800; }
.type { fill: #2a3d57; stroke: #2a3d57; stroke-width: .9; }
.plan text { dominant-baseline: central; text-anchor: middle; }
.dt { font: 10px "Liberation Sans", sans-serif; fill: #333; }
.dt .s { font-size: 8px; }
.cnt { font: 13px Roboto, sans-serif; fill: #2b2b2b; }
.cnt text { stroke: none; }
.cnt .wt { fill: #fff; }
.calls { font: 500 14.500px Roboto, sans-serif; fill: #ffff99; stroke: #111; stroke-width: 1.200; }
.calls text { fill: #111; stroke: none; }
.done { fill: #d2d3c3; stroke: #555; font-weight: 400; }
.done text { fill: #444; text-decoration: line-through; }

.legend { position: absolute; background: #fff; border: 1px solid #333; font-family: "Roboto Mono", "DejaVu Sans Mono", monospace; color: #222; }
.legend h2 { text-align: center; }
.takeoff-legend { left: 802px; top: 169px; width: 451px; height: 203px; padding: 0 2px 0 3px; font-size: 12.600px; }
.takeoff-legend h2 { font-size: 14.500px; line-height: 24px; height: 30px; }
.lg { display: flex; height: 12.630px; line-height: 12.630px; white-space: pre; }
.lg i { width: 13.500px; margin-right: 2px; }
.lg span { flex: 1; }
.lg b { color: #111; }
.note-legend { left: 837px; top: 390px; width: 390px; height: 365px; font-size: 13.950px; line-height: 14px; }
.note-legend h2 { font-size: 15.900px; line-height: 28px; height: 34px; }
.an { display: flex; margin-bottom: 21.100px; white-space: nowrap; }
.an sup { width: 16px; margin-right: 6.500px; text-align: right; font-size: 10px; vertical-align: baseline; }
.chat { position: absolute; left: 1371px; top: 736px; width: 60px; height: 60px; border-radius: 50% 8px 50% 50%; background: #081f2b; box-shadow: 0 2px 5px rgba(0,0,0,.45); display: flex; align-items: center; justify-content: center; }
.footer { height: 20px; flex: none; background: #081f2b; display: flex; align-items: center; padding: 0 28px 0 10px; font-size: 14px; color: #d6dade; }
.footer .i14 { margin-left: 16px; color: #f0c129; }
.footer em { font-size: 14.400px; }
.ver { margin-left: auto; margin-right: 10px; font-size: 14.200px; }

.c-mur { background: #0f08dc; } .c-div { background: #dc5f08; } .c-patio { background: #170fdc; }
.c-window { background: #689ff2; } .c-wood { background: #bad4f6; } .c-float { background: #dde6f5; }
.c-tile { background: #fbe3c8; } .c-d20 { background: #f5ea0c; } .c-d28 { background: #ee8078; }
.c-d30 { background: #f5940b; } .c-fold { background: #f5560a; } .c-area { background: #fafaca; }
.c-green { background: #8aee80; } .c-grey { background: #958988; }

.guide { position: absolute; left: 0; top: 0; z-index: 5; pointer-events: none; }
.guide-no { font: 17px Roboto, sans-serif; fill: #fff; text-anchor: middle; dominant-baseline: central; }
```
